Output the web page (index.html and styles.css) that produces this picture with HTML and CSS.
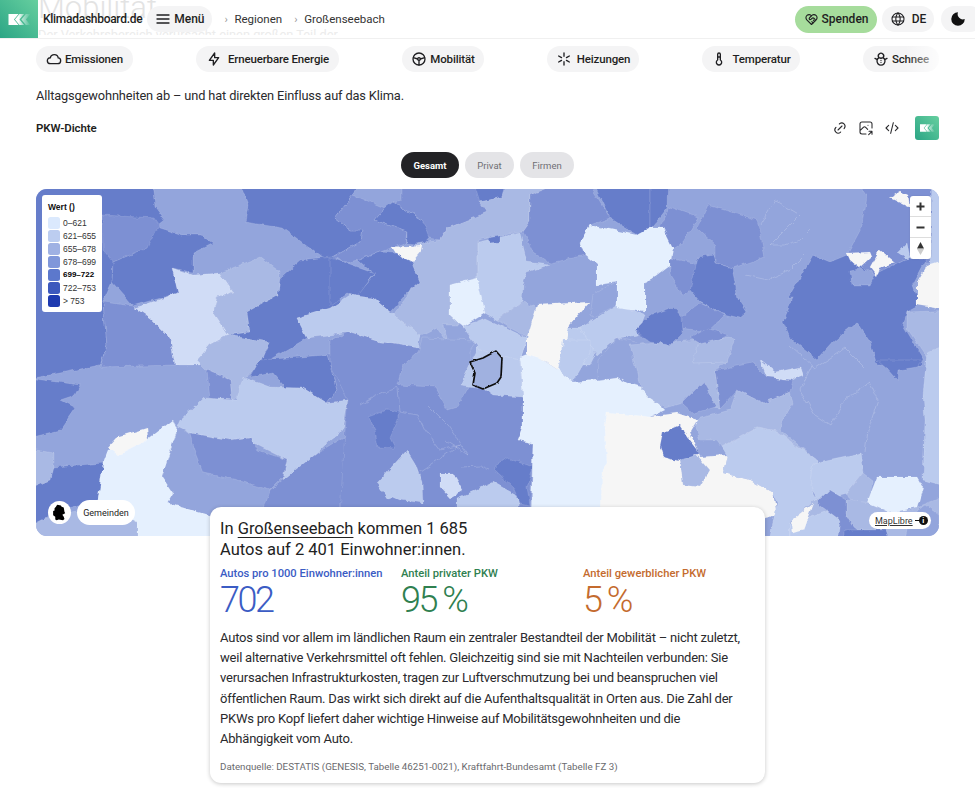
FILE: index.html
```html
<!DOCTYPE html>
<html lang="de">
<head>
<meta charset="utf-8">
<title>PKW-Dichte – Klimadashboard.de</title>
<link rel="stylesheet" href="styles.css">
</head>
<body>
<svg class="defs" width="0" height="0" aria-hidden="true">
  <defs>
    <linearGradient id="chev" gradientUnits="userSpaceOnUse" x1="0" y1="0" x2="24" y2="0"><stop offset="0" stop-color="#fff"/><stop offset=".45" stop-color="#fff"/><stop offset=".62" stop-color="#fff" stop-opacity=".6"/><stop offset="1" stop-color="#fff" stop-opacity="0"/></linearGradient>
    <symbol id="logoMark" viewBox="0 0 24 12"><path fill="url(#chev)" d="M0 0h11L6 6l5 6H0zM12 0h5l-5 6 5 6h-5L7 6zM19 0h5l-5 6 5 6h-5l-5-6z"/></symbol>
  </defs>
</svg>
<header class="topbar">
  <div class="ghost-title">Mobilität</div>
  <div class="ghost-text">Der Verkehrsbereich verursacht einen großen Teil der</div>
  <div class="progress"></div>
  <a class="logo"><svg class="logo-mark" aria-hidden="true"><use href="#logoMark"/></svg></a>
  <span class="brand">Klimadashboard.de</span>
  <button class="pill menu-pill">
    <svg class="ico" viewBox="0 0 24 24"><path d="M3 6h18M3 12h18M3 18h18"/></svg>Menü
  </button>
  <nav class="crumbs">
    <span class="sep">›</span><span>Regionen</span><span class="sep">›</span><span>Großenseebach</span>
  </nav>
  <div class="top-actions">
    <button class="pill donate">
      <svg class="ico ico-s" viewBox="0 0 24 24"><path d="M19.5 12.6 12 20l-7.5-7.4A5 5 0 1 1 12 6a5 5 0 1 1 7.5 6.6z"/><path d="M12 6 8.700 9.300a1.700 1.700 0 0 0 2.400 2.400l1.900-1.700a2 2 0 0 1 2.800 0l2.200 2.200M12.500 15.500l2 2M15 13l2 2"/></svg>Spenden
    </button>
    <button class="pill lang">
      <svg class="ico" viewBox="0 0 24 24"><circle cx="12" cy="12" r="9"/><path d="M3.600 9h16.800M3.600 15h16.800M11.500 3a17 17 0 0 0 0 18M12.500 3a17 17 0 0 1 0 18"/></svg>DE
    </button>
    <button class="pill moon">
      <svg class="moon-ico" viewBox="0 0 24 24"><path d="M12 3a9 9 0 1 0 9 9 7 7 0 0 1-9-9z"/></svg>
    </button>
  </div>
</header>

<nav class="cats">
  <a class="pill cat cat-a"><svg class="ico" viewBox="0 0 24 24"><path d="M6.700 19C4 19 2 17 2 14.500S4 10 6.500 10.200C7 7.500 9.500 5.500 12.500 5.500c3.200 0 5.500 2.200 5.800 4.800 2.200.2 3.700 2 3.700 4.200 0 2.500-2 4.500-4.500 4.500z"/></svg>Emissionen</a>
  <a class="pill cat cat-b"><svg class="ico" viewBox="0 0 24 24"><path d="M13 3v7h6l-8 11v-7H5z"/></svg>Erneuerbare Energie</a>
  <a class="pill cat cat-c"><svg class="ico" viewBox="0 0 24 24"><circle cx="12" cy="12" r="9"/><circle cx="12" cy="12" r="2"/><path d="M12 14v7M10 12 3.500 10M14 12l6.500-2"/></svg>Mobilität</a>
  <a class="pill cat cat-d"><svg class="ico" viewBox="0 0 24 24"><path d="M12 3v5M12 16v5M4 7.500l4.300 2.500M15.700 14l4.300 2.500M20 7.500 15.700 10M8.300 14 4 16.500"/></svg>Heizungen</a>
  <a class="pill cat cat-e"><svg class="ico" viewBox="0 0 24 24"><path d="M10 13.500V5a2 2 0 1 1 4 0v8.500a4 4 0 1 1-4 0zM10 9h4"/></svg>Temperatur</a>
  <a class="pill cat cat-f"><svg class="ico" viewBox="0 0 24 24"><path d="M9 10a4 4 0 1 1 6 0M9 10a6 6 0 1 0 6 0M9 10c1.800 1 4.200 1 6 0M6.500 13 3 11M17.500 13l3.500-2M12 14v.01M12 17v.01"/></svg>Schnee</a>
  <div class="cats-fade"></div>
</nav>

<main class="content">
  <p class="lead">Alltagsgewohnheiten ab – und hat direkten Einfluss auf das Klima.</p>

  <div class="chart-head">
    <h2 class="chart-title">PKW-Dichte</h2>
    <div class="tools">
      <svg class="ico ico-t" viewBox="0 0 24 24"><path d="M9 15l6-6M11 6l.5-.5a5 5 0 0 1 7 7l-.5.500M13 18l-.4.500a5 5 0 0 1-7.100-7l.5-.5"/></svg>
      <svg class="ico ico-t" viewBox="0 0 24 24"><path d="M15 8h.01M12 21H6a3 3 0 0 1-3-3V6a3 3 0 0 1 3-3h12a3 3 0 0 1 3 3v6M3 16l5-5c1-1 2.500-1 3.500 0l3 3M16 22l5-5M21 21.500V17h-4.500"/></svg>
      <svg class="ico ico-t" viewBox="0 0 24 24"><path d="M7 8l-4 4 4 4M17 8l4 4-4 4M14 4l-4 16"/></svg>
      <span class="mini-logo"><svg class="mini-mark" aria-hidden="true"><use href="#logoMark"/></svg></span>
    </div>
  </div>

  <div class="segments">
    <button class="seg seg-on">Gesamt</button>
    <button class="seg">Privat</button>
    <button class="seg">Firmen</button>
  </div>

  <section class="map">
    <svg class="map-svg" viewBox="36 189 903 347" preserveAspectRatio="none" aria-hidden="true">
      <defs>
        <filter id="rough" filterUnits="userSpaceOnUse" x="0" y="150" width="975" height="420">
          <feTurbulence type="fractalNoise" baseFrequency=".12" numOctaves="3" seed="4"/>
          <feDisplacementMap in="SourceGraphic" scale="5" xChannelSelector="R" yChannelSelector="G"/>
          <feGaussianBlur stdDeviation=".35"/>
        </filter>
        <filter id="rough2" filterUnits="userSpaceOnUse" x="440" y="330" width="90" height="80">
          <feTurbulence type="fractalNoise" baseFrequency=".18" numOctaves="2" seed="7"/>
          <feDisplacementMap in="SourceGraphic" scale="2.500" xChannelSelector="R" yChannelSelector="G"/>
        </filter>
      </defs>
      <g class="regions" filter="url(#rough)">
        <rect class="c4" x="20" y="170" width="940" height="385"/>
        <polygon class="c6" points="20,170 150,170 155,206 165,220 150,232 140,250 113,262 112,282 103,302 107,345 100,365 50,375 20,380"/>
        <polygon class="c5" points="102,215 155,218 160,225 148,248 113,262 103,250"/>
        <polygon class="c5" points="103,302 133,306 150,318 170,338 175,365 100,367 107,345"/>
        <polygon class="c6" points="113,262 147,248 157,227 182,235 200,235 213,243 193,253 193,273 173,268 178,293 133,306 112,282"/>
        <polygon class="c1" points="172,268 193,275 220,273 233,292 217,298 213,313 228,335 210,345 200,365 175,365 170,338 150,318 135,308 178,293"/>
        <polygon class="c3" points="220,273 260,257 280,272 278,295 247,312 250,332 228,335 213,313 217,298 233,292"/>
        <polygon class="c6" points="278,295 280,278 300,260 335,256 340,310 297,318 307,338 290,348 260,365 230,335 250,332 247,312"/>
        <polygon class="c3" points="228,335 270,342 260,365 243,380 260,390 238,397 232,400 230,380 207,370 197,360 210,345"/>
        <polygon class="c5" points="207,370 230,380 232,400 237,403 210,398"/>
        <polygon class="c6" points="250,377 260,360 327,355 337,390 327,403 303,388 290,393 273,373"/>
        <polygon class="c5" points="327,355 350,355 350,400 327,403 337,390"/>
        <polygon class="c6" points="20,377 80,385 75,395 60,400 75,408 60,430 20,440"/>
        <polygon class="c3" points="20,447 53,453 53,495 20,495"/>
        <polygon class="c3" points="36,520 137,500 140,550 36,550"/>
        <polygon class="c6" points="53,467 105,463 98,500 60,510 20,530 20,493 50,480"/>
        <polygon class="c0" points="103,463 108,450 147,440 173,420 177,430 162,477 173,493 167,503 215,517 215,550 137,550 137,522 98,500"/>
        <polygon class="nd" points="108,447 117,437 147,428 148,440 118,455"/>
        <polygon class="c2" points="180,420 203,398 237,400 243,377 270,387 303,388 327,403 348,400 343,430 330,440 317,453 317,473 283,480 287,460 253,443 250,437 230,440 190,433 177,427"/>
        <polygon class="c5" points="190,433 230,440 250,437 257,450 287,460 283,477 270,490 237,480 203,473 193,447"/>
        <polygon class="c5" points="270,490 317,453 350,433 350,515 262,515"/>
        <polygon class="c6" points="235,170 368,170 353,195 335,218 350,230 362,230 360,242 333,257 323,258 283,228 245,222 248,205"/>
        <polygon class="c5" points="335,218 353,195 385,208 375,220 407,232 405,243 380,252 358,260 347,263 333,257 360,242 362,230 350,230"/>
        <polygon class="c6" points="375,220 385,208 393,202 423,220 432,235 423,245 407,243 407,232"/>
        <polygon class="c5" points="402,170 470,170 487,212 485,218 473,218 448,228 440,240 430,238 423,220 393,202 402,200"/>
        <polygon class="c6" points="470,170 517,170 503,197 480,202"/>
        <polygon class="c3" points="480,202 503,197 507,180 570,180 530,195 530,222 523,232 503,235 478,240 478,282 450,285 450,315 463,325 443,325 447,343 437,328 417,338 393,315 418,282 413,265 410,258 422,250 410,245 440,240 448,228 473,218 487,212"/>
        <polygon class="nd" points="392,247 423,245 422,250 412,262 397,255"/>
        <polygon class="c6" points="358,260 380,252 393,253 412,262 420,282 407,293 390,312 373,298 355,297 375,275"/>
        <polygon class="c6" points="330,258 347,263 375,273 357,297 347,293 330,305"/>
        <polygon class="c2" points="297,318 330,308 350,295 373,298 390,312 420,335 418,348 380,342 350,332 330,335 307,338"/>
        <polygon class="c5" points="330,340 350,332 380,342 418,348 523,397 523,427 518,440 533,443 530,515 340,515 345,430 348,400 330,365"/>
        <polygon class="c4" points="422,338 477,340 470,350 470,385 457,407 447,410 435,387 397,385 402,367 418,353"/>
        <polygon class="c2" points="477,335 527,338 520,360 523,397 493,395 483,388 460,385 477,350"/>
        <polygon class="c6" points="368,417 387,410 398,412 398,420 390,438 395,448 378,447 375,430"/>
        <polygon class="c2" points="377,483 407,450 415,463 422,483 423,503 400,500 393,497 387,498"/>
        <polygon class="c1" points="440,473 453,473 463,490 450,498 440,487"/>
        <polygon class="c2" points="457,498 493,482 520,497 518,515 457,515"/>
        <polygon class="c6" points="493,468 507,458 532,467 527,487 530,505 520,503 513,487"/>
        <polygon class="c0" points="450,285 478,278 487,312 463,327 450,315"/>
        <polygon class="c2" points="478,242 520,233 527,262 550,265 527,272 523,285 522,302 497,320 485,313 478,282"/>
        <polygon class="c6" points="487,237 500,235 500,242 490,243"/>
        <polygon class="c5" points="530,195 570,180 587,180 610,218 590,225 580,242 585,255 550,263 533,252 523,232 530,222"/>
        <polygon class="c6" points="587,170 650,170 650,228 637,235 610,218"/>
        <polygon class="c3" points="497,320 523,302 537,308 530,338 510,328"/>
        <polygon class="c2" points="463,327 485,318 527,338 520,360 480,350"/>
        <polygon class="c4" points="590,315 593,295 618,280 617,305 593,317"/>
        <polygon class="c2" points="563,328 590,328 595,355 590,365 562,365"/>
        <polygon class="c2" points="580,328 617,305 645,315 637,335 617,338 597,355"/>
        <polygon class="c6" points="635,332 650,315 650,342"/>
        <polygon class="c4" points="598,360 617,338 650,345 640,387 627,383 617,377 597,380"/>
        <polygon class="c0" points="520,357 530,353 543,360 558,370 573,382 597,380 617,377 627,383 640,387 650,395 665,410 650,417 640,560 530,560 533,443 518,440 523,427 523,397"/>
        <polygon class="nd" points="537,305 590,302 570,325 563,365 558,370 543,360 527,355 527,338"/>
        <polygon class="c2" points="563,340 590,340 590,353 573,382 558,370"/>
        <polygon class="c3" points="630,345 727,338 727,362 715,370 720,408 682,403 665,408 650,398 640,387"/>
        <polygon class="c6" points="668,170 667,208 650,230 650,170"/>
        <polygon class="c5" points="670,207 698,217 683,242 673,248 660,228"/>
        <polygon class="c5" points="708,205 757,220 765,257 733,268 715,263 715,245 697,228"/>
        <polygon class="c0" points="580,242 590,225 637,235 650,228 663,228 673,248 670,265 650,280 645,282 645,312 617,308 617,282 597,285 597,265 585,255"/>
        <polygon class="c5" points="670,258 693,263 700,268 690,290 683,295 670,275"/>
        <polygon class="c6" points="698,258 713,255 715,263 732,268 738,298 747,312 740,318 720,313 700,302 690,290"/>
        <polygon class="c5" points="680,318 700,303 720,313 725,315 707,332 683,328"/>
        <polygon class="c6" points="650,315 673,307 682,317 683,332 670,345 650,342 635,330"/>
        <polygon class="c5" points="690,338 708,328 727,335 705,347"/>
        <polygon class="c3" points="697,345 727,337 735,338 727,362 693,363"/>
        <polygon class="c5" points="850,170 960,170 960,262 927,262 907,258 873,275 847,255 863,225 867,195"/>
        <polygon class="c2" points="932,170 960,170 960,265 930,265"/>
        <polygon class="c6" points="813,255 830,262 847,255 873,275 907,258 927,258 913,285 920,305 907,312 903,325 923,358 922,367 877,365 870,342 857,322 833,342 817,360 790,338 783,322 793,298 788,298"/>
        <polygon class="nd" points="890,197 900,191 908,195 910,207"/>
        <polygon class="nd" points="847,253 870,252 872,257 860,268 850,260"/>
        <polygon class="c4" points="850,270 860,268 875,275 870,285 852,285"/>
        <polygon class="nd" points="870,268 880,250 895,262 880,268 877,277"/>
        <polygon class="c2" points="897,253 907,243 910,257 907,260"/>
        <polygon class="nd" points="917,282 927,265 960,255 960,312 917,305"/>
        <polygon class="c3" points="907,312 960,310 960,345 927,358 907,328"/>
        <polygon class="c2" points="960,340 927,352 923,395 925,420 923,480 960,490"/>
        <polygon class="c6" points="877,360 923,360 917,367 898,370 897,380 888,370"/>
        <polygon class="c1" points="760,360 775,372 800,367 803,376 793,380 767,377"/>
        <polygon class="c5" points="715,370 753,363 767,377 793,380 790,392 763,403 737,390 720,408"/>
        <polygon class="c5" points="682,403 703,382 717,407 693,413"/>
        <polygon class="c3" points="693,420 730,410 737,390 763,403 790,392 793,403 782,422 780,430 817,460 777,432 757,428 722,447 717,440 700,440"/>
        <polygon class="nd" points="650,417 677,413 697,420 690,432 700,457 727,455 723,473 750,480 773,493 777,515 600,560 602,470 607,463 605,427 607,412"/>
        <polygon class="c6" points="663,432 680,425 690,440 700,453 683,462 663,457 660,447"/>
        <polygon class="c3" points="680,460 697,455 710,470 700,487 683,485"/>
        <polygon class="c2" points="722,447 757,428 777,432 817,460 813,493 817,500 790,523 790,560 765,560 777,503 773,493 750,480 723,473 727,455"/>
        <polygon class="c2" points="810,480 813,463 860,453 863,473 847,493 817,500"/>
        <polygon class="c3" points="847,493 863,473 872,480 870,503 853,505"/>
        <polygon class="c3" points="790,523 813,500 847,500 870,503 910,510 960,490 960,560 790,560"/>
        <polygon class="c2" points="790,525 830,510 840,520 845,560 790,560"/>
        <polygon class="c0" points="867,503 877,477 917,477 923,487 917,507 890,513"/>
        <polygon class="c5" points="817,503 830,490 847,500 847,517 853,527 863,535 850,560 835,560 840,520"/>
        <polygon class="c6" points="845,530 885,530 895,560 845,560"/>
        <polygon class="nd" points="792,520 813,503 803,530 793,533"/>
        <polygon class="c4" points="910,515 925,505 939,515 939,540 905,540"/>
        <polyline class="edge" points="360,405 372,398 385,392 398,388 400,412 418,415 425,430 440,450 460,445 438,460 420,472"/>
        <polyline class="edge" points="428,405 448,425 468,455 445,440"/>
        <polyline class="edge" points="462,467 480,466 490,470"/>
        <polyline class="edge" points="760,225 775,200 800,215 770,245 785,245 800,240 810,230"/>
        <polyline class="edge" points="812,365 800,390 815,415 830,425 845,400 870,382 878,400 868,430 865,452"/>
        <polyline class="edge" points="745,275 768,280 790,270 805,255"/>
        <polyline class="edge" points="790,345 815,368 845,348 865,368"/>
      </g>
      <polygon class="selected" filter="url(#rough2)" points="470,362 483,358 496,351 502,358 501,377 497,383 483,389 473,385 475,373"/>
    </svg>

    <div class="legend">
      <div class="legend-title">Wert ()</div>
      <div class="legend-row"><i class="sw s0"></i>0–621</div>
      <div class="legend-row"><i class="sw s1"></i>621–655</div>
      <div class="legend-row"><i class="sw s2"></i>655–678</div>
      <div class="legend-row"><i class="sw s3"></i>678–699</div>
      <div class="legend-row strong"><i class="sw s4"></i>699–722</div>
      <div class="legend-row"><i class="sw s5"></i>722–753</div>
      <div class="legend-row"><i class="sw s6"></i>&gt; 753</div>
    </div>

    <div class="zoomctl">
      <button class="zbtn"><svg viewBox="0 0 21 21" class="zsvg"><path d="M10.500 6.500v8M6.500 10.500h8"/></svg></button>
      <button class="zbtn"><svg viewBox="0 0 21 21" class="zsvg"><path d="M6.500 10.500h8"/></svg></button>
      <button class="zbtn"><svg viewBox="0 0 21 21" class="csvg"><path class="n" d="M10.500 4 14 10.500H7z"/><path class="s" d="M10.500 17 14 11H7z"/></svg></button>
    </div>

    <div class="bottom-left">
      <span class="de-btn"><svg viewBox="0 0 24 24" class="de-svg"><path d="M9 1l5 1 1 2 3 1 1 6 1 2-4 2 2 3 1 3-2 2-6-1-3 1-2-1 0-4-3-2 0-6 2-1 0-3 2-2 1-2z"/></svg></span>
      <span class="geo-pill">Gemeinden</span>
    </div>
    <div class="attrib"><span class="attrib-link">MapLibre</span><span class="attrib-dash"></span><span class="attrib-i">i</span></div>
  </section>

  <article class="panel">
    <h3 class="panel-title">In <u>Großenseebach</u> kommen 1 685<br>Autos auf 2 401 Einwohner:innen.</h3>
    <div class="stats">
      <div class="stat blue"><div class="stat-label">Autos pro 1000 Einwohner:innen</div><div class="stat-value">702</div></div>
      <div class="stat green"><div class="stat-label">Anteil privater PKW</div><div class="stat-value">95 %</div></div>
      <div class="stat orange"><div class="stat-label">Anteil gewerblicher PKW</div><div class="stat-value">5 %</div></div>
    </div>
    <p class="panel-body">Autos sind vor allem im ländlichen Raum ein zentraler Bestandteil der Mobilität – nicht zuletzt,<br>weil alternative Verkehrsmittel oft fehlen. Gleichzeitig sind sie mit Nachteilen verbunden: Sie<br>verursachen Infrastrukturkosten, tragen zur Luftverschmutzung bei und beanspruchen viel<br>öffentlichen Raum. Das wirkt sich direkt auf die Aufenthaltsqualität in Orten aus. Die Zahl der<br>PKWs pro Kopf liefert daher wichtige Hinweise auf Mobilitätsgewohnheiten und die<br>Abhängigkeit vom Auto.</p>
    <p class="panel-source">Datenquelle: DESTATIS (GENESIS, Tabelle 46251-0021), Kraftfahrt-Bundesamt (Tabelle FZ 3)</p>
  </article>
</main>
</body>
</html>
```

FILE: styles.css
```css
* { box-sizing: border-box; }
html, body { margin: 0; padding: 0; }
body {
  width: 975px;
  height: 800px;
  overflow: hidden;
  background: #fff;
  color: #1f1f22;
  font-family: Roboto, "Liberation Sans", sans-serif;
}
button { font: inherit; color: inherit; border: 0; }
.defs { display: block; height: 0; }

.topbar {
  position: relative;
  display: flex;
  align-items: center;
  height: 39px;
  padding-right: 0;
  overflow: hidden;
  border-bottom: 1px solid #f0f0f0;
  background: #fff;
}
.ghost-title {
  position: absolute;
  left: 38px;
  top: -12px;
  font-size: 31px;
  line-height: 40px;
  font-weight: 300;
  color: #e3e3e3;
}
.ghost-text {
  position: absolute;
  left: 38px;
  top: 28px;
  height: 7px;
  overflow: hidden;
  font-size: 12.800px;
  line-height: 14px;
  color: #ececec;
  white-space: nowrap;
}
.progress {
  position: absolute;
  left: 38px;
  bottom: -1px;
  width: 417px;
  height: 1.500px;
  background: #5dc9a2;
}
.logo {
  position: relative;
  flex: none;
  display: flex;
  align-items: center;
  justify-content: center;
  width: 38px;
  height: 39px;
  background: linear-gradient(45deg, #2ba585, #66cf9f);
}
.logo-mark { width: 23px; height: 11px; }
.brand {
  position: relative;
  margin-left: 5px;
  font-size: 12px;
  font-weight: 500;
  letter-spacing: -.28px;
  white-space: nowrap;
}
.pill {
  display: inline-flex;
  align-items: center;
  justify-content: center;
  flex: none;
  border-radius: 14px;
  background: #f4f4f5;
  white-space: nowrap;
  font-size: 12px;
  font-weight: 500;
}
.ico {
  width: 16px;
  height: 16px;
  fill: none;
  stroke: #1f1f22;
  stroke-width: 2;
  stroke-linecap: round;
  stroke-linejoin: round;
  flex: none;
}
.menu-pill {
  position: relative;
  width: 65px;
  height: 26px;
  margin-left: 5px;
  gap: 3px;
}
.crumbs {
  position: relative;
  display: flex;
  align-items: center;
  margin-left: 12px;
  font-size: 11.500px;
  color: #333;
  white-space: nowrap;
}
.crumbs .sep { width: 10px; color: #999; font-size: 11px; }
.crumbs span:nth-child(3) { margin-left: 12px; }
.top-actions {
  position: relative;
  display: flex;
  align-items: center;
  gap: 5px;
  margin-left: auto;
  flex: none;
  width: 180px;
}
.donate {
  width: 82px;
  height: 27px;
  gap: 3px;
  background: #a6dc9c;
}
.ico-s { width: 15px; height: 15px; stroke-width: 1.800; }
.lang {
  width: 52px;
  height: 26px;
  gap: 6px;
}
.lang .ico { stroke-width: 1.600; }
.moon {
  width: 42px;
  height: 26px;
  margin-left: 2px;
  justify-content: flex-start;
  padding-left: 8px;
}
.moon-ico { width: 18px; height: 18px; fill: #111; }

.cats {
  position: relative;
  display: flex;
  justify-content: space-between;
  padding: 7px 36px 0;
}
.cat {
  height: 26px;
  gap: 3px;
  font-size: 11.500px;
  letter-spacing: -.15px;
}
.cat-a { width: 97px; }
.cat-b { width: 143px; gap: 6px; }
.cat-c { width: 82px; }
.cat-d { width: 92px; gap: 5px; }
.cat-e { width: 98px; gap: 5px; }
.cat-f { width: 76px; }
.cats-fade {
  position: absolute;
  right: 36px;
  top: 7px;
  width: 34px;
  height: 26px;
  background: linear-gradient(90deg, rgba(255,255,255,0), rgba(255,255,255,.75));
}

.content { padding: 0 36px; }
.lead {
  margin: 15px 0 0;
  font-size: 12.800px;
  line-height: 18px;
  color: #2a2a2d;
  letter-spacing: -.13px;
}
.chart-head {
  display: flex;
  align-items: center;
  justify-content: space-between;
  height: 24px;
  margin-top: 11px;
}
.chart-title {
  margin: 0;
  font-size: 11.500px;
  font-weight: 600;
  letter-spacing: -.1px;
}
.tools {
  display: flex;
  align-items: center;
  gap: 10px;
}
.ico-t { width: 16px; height: 16px; stroke-width: 1.600; stroke: #2a2a2d; }
.mini-logo {
  display: flex;
  align-items: center;
  justify-content: center;
  width: 24px;
  height: 24px;
  margin-left: 5px;
  border-radius: 3px;
  background: linear-gradient(45deg, #2ba585, #66cf9f);
}
.mini-mark { width: 15px; height: 8px; }

.segments {
  display: flex;
  justify-content: center;
  gap: 6px;
  margin-top: 12px;
}
.seg {
  height: 26px;
  padding: 0;
  width: 49px;
  border-radius: 13px;
  background: #e4e4e7;
  color: #6f6f74;
  font-size: 9.500px;
}
.seg:last-child { width: 54px; }
.seg-on {
  width: 58px;
  background: #232326;
  color: #fff;
  font-weight: 700;
}

.map {
  position: relative;
  height: 347px;
  margin-top: 11px;
  border-radius: 11px;
  overflow: hidden;
  background: #93a5dc;
}
.map-svg { display: block; width: 100%; height: 100%; }
.c0 { fill: #e5f0fe; }
.c1 { fill: #d0dcf6; }
.c2 { fill: #bbcbee; }
.c3 { fill: #a9b9e4; }
.c4 { fill: #93a5dc; }
.c5 { fill: #7d90d3; }
.c6 { fill: #667dca; }
.nd { fill: #f6f6f6; }
.regions polygon { stroke: rgba(255,255,255,.22); stroke-width: .6; stroke-linejoin: round; }
.regions .edge { fill: none; stroke: rgba(255,255,255,.3); stroke-width: .6; }
.selected { fill: #a0b1e0; stroke: #111; stroke-width: 1.700; stroke-linejoin: round; }

.legend {
  position: absolute;
  left: 6px;
  top: 6px;
  width: 60px;
  height: 117px;
  padding: 7px 5px 0 6px;
  background: #fff;
  border-radius: 3px;
  font-family: "Liberation Sans", Arial, sans-serif;
  font-size: 8.500px;
  color: #333;
}
.legend-title { font-weight: 700; color: #111; line-height: 11px; margin-bottom: 3px; }
.legend-row {
  display: flex;
  align-items: center;
  gap: 3px;
  height: 13px;
  white-space: nowrap;
}
.legend-row.strong { color: #000; font-weight: 700; font-size: 8px; }
.sw { width: 12px; height: 12px; border-radius: 2.500px; flex: none; }
.s0 { background: #dbe9fd; }
.s1 { background: #bccdf0; }
.s2 { background: #9fb1e3; }
.s3 { background: #8097da; }
.s4 { background: #5c78cc; }
.s5 { background: #3c58bd; }
.s6 { background: #1e3ab0; }

.zoomctl {
  position: absolute;
  right: 8px;
  top: 7px;
  width: 21px;
  background: #fff;
  border-radius: 3px;
  box-shadow: 0 0 2px rgba(0,0,0,.12);
}
.zbtn {
  display: block;
  width: 21px;
  height: 21px;
  padding: 0;
  background: transparent;
  border-bottom: 1px solid #ddd;
}
.zbtn:last-child { border-bottom: 0; }
.zsvg { display: block; width: 21px; height: 21px; fill: none; stroke: #333; stroke-width: 2; }
.csvg { display: block; width: 21px; height: 21px; }
.csvg .n { fill: #333; }
.csvg .s { fill: #ccc; }

.bottom-left {
  position: absolute;
  left: 12px;
  bottom: 11px;
  display: flex;
  align-items: center;
  gap: 6px;
}
.de-btn {
  display: flex;
  align-items: center;
  justify-content: center;
  width: 23px;
  height: 23px;
  border-radius: 50%;
  background: #fff;
}
.de-svg { width: 17px; height: 19px; fill: #000; }
.geo-pill {
  display: flex;
  align-items: center;
  justify-content: center;
  width: 58px;
  height: 25px;
  border-radius: 13px;
  background: #fff;
  font-size: 9px;
  color: #222;
}
.attrib {
  position: absolute;
  right: 8px;
  bottom: 7px;
  display: flex;
  align-items: center;
  width: 62px;
  height: 17px;
  padding-left: 6px;
  border-radius: 9px;
  background: #fff;
  font-size: 9px;
  color: #333;
}
.attrib-link { text-decoration: underline; }
.attrib-dash { width: 4px; height: 1.500px; margin-left: 2px; background: #111; }
.attrib-i {
  display: flex;
  align-items: center;
  justify-content: center;
  width: 9px;
  height: 9px;
  border-radius: 50%;
  background: #111;
  color: #fff;
  font-size: 7.500px;
  font-weight: 700;
}

.panel {
  position: relative;
  width: 555px;
  height: 276px;
  margin: -29px 0 0 174px;
  padding: 11px 10px 0;
  background: #fff;
  border-radius: 11px;
  box-shadow: 0 1px 4px rgba(0,0,0,.22);
}
.panel-title {
  margin: 0;
  font-size: 16.500px;
  line-height: 21px;
  font-weight: 400;
  color: #222;
}
.panel-title u { text-underline-offset: 3px; text-decoration-thickness: 1px; }
.stats {
  display: grid;
  grid-template-columns: 181px 182px 1fr;
  margin-top: 7px;
}
.stat-label {
  font-size: 11.200px;
  line-height: 14px;
  font-weight: 500;
  white-space: nowrap;
}
.stat-value {
  margin-top: 1px;
  font-size: 36px;
  line-height: 36px;
  font-weight: 300;
  letter-spacing: -2.500px;
}
.blue { color: #3b5cc4; }
.green { color: #2f8050; }
.orange { color: #c46b2e; }
.panel-body {
  margin: 10px 0 0;
  font-size: 13px;
  line-height: 20.200px;
  color: #2a2a2d;
  white-space: nowrap;
  letter-spacing: -.22px;
}
.panel-source {
  margin: 12px 0 0;
  font-size: 9.750px;
  line-height: 12px;
  color: #6a6a6e;
}
```
